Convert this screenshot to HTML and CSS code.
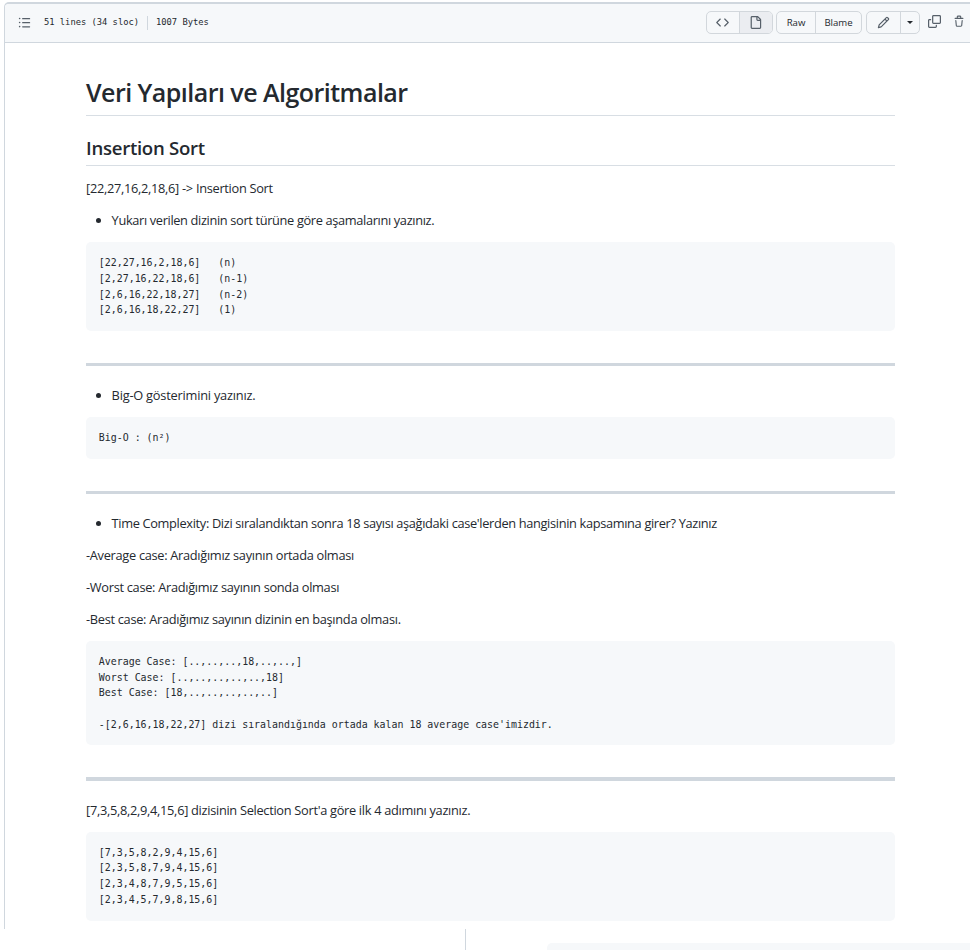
FILE: index.html
```
<!DOCTYPE html>
<html lang="tr">
<head>
<meta charset="utf-8">
<title>Veri Yapıları ve Algoritmalar</title>
<link rel="stylesheet" href="styles.css">
</head>
<body>
<main class="file">
  <header class="toolbar">
    <svg class="icon icon-list" viewBox="0 0 16 16"><path d="M2 4a1 1 0 1 0 0-2 1 1 0 0 0 0 2zm3.75-1.5a.75.75 0 0 0 0 1.5h8.5a.75.75 0 0 0 0-1.5h-8.5zm0 5a.75.75 0 0 0 0 1.5h8.5a.75.75 0 0 0 0-1.5h-8.5zm0 5a.75.75 0 0 0 0 1.5h8.5a.75.75 0 0 0 0-1.5h-8.5zM3 8a1 1 0 1 1-2 0 1 1 0 0 1 2 0zm-1 6a1 1 0 1 0 0-2 1 1 0 0 0 0 2z"/></svg>
    <span class="stat">51 lines (34 sloc)</span>
    <span class="stat-divider"></span>
    <span class="stat">1007 Bytes</span>
    <div class="actions">
      <div class="group group-view">
        <span class="btn"><svg class="icon" viewBox="0 0 16 16"><path d="M4.72 3.22a.75.75 0 0 1 1.06 1.06L2.06 8l3.72 3.72a.75.75 0 1 1-1.06 1.06L.47 8.53a.75.75 0 0 1 0-1.06l4.25-4.25zm6.56 0a.75.75 0 1 0-1.06 1.06L13.94 8l-3.72 3.72a.75.75 0 1 0 1.06 1.06l4.25-4.25a.75.75 0 0 0 0-1.06l-4.25-4.25z"/></svg></span>
        <span class="btn btn-selected"><svg class="icon" viewBox="0 0 16 16"><path fill-rule="evenodd" d="M3.75 1.5a.25.25 0 0 0-.25.25v12.5c0 .138.112.25.25.25h9.5a.25.25 0 0 0 .25-.25V6h-2.75A1.75 1.75 0 0 1 9 4.25V1.5H3.75zm6.75.062V4.25c0 .138.112.25.25.25h2.688a.252.252 0 0 0-.011-.013l-2.914-2.914a.272.272 0 0 0-.013-.011zM2 1.75C2 .784 2.784 0 3.75 0h6.586c.464 0 .909.184 1.237.513l2.914 2.914c.329.328.513.773.513 1.237v9.586A1.75 1.75 0 0 1 13.25 16h-9.5A1.75 1.75 0 0 1 2 14.25V1.75z"/></svg></span>
      </div>
      <div class="group group-text">
        <span class="btn">Raw</span>
        <span class="btn">Blame</span>
      </div>
      <div class="group group-edit">
        <span class="btn"><svg class="icon" viewBox="0 0 16 16"><path fill-rule="evenodd" d="M11.013 1.427a1.75 1.75 0 0 1 2.474 0l1.086 1.086a1.75 1.75 0 0 1 0 2.474l-8.61 8.61c-.21.21-.47.364-.756.445l-3.251.93a.75.75 0 0 1-.927-.928l.929-3.25a1.75 1.75 0 0 1 .445-.758l8.61-8.61zm1.414 1.06a.25.25 0 0 0-.354 0L10.811 3.75l1.439 1.44 1.263-1.263a.25.25 0 0 0 0-.354l-1.086-1.086zM11.189 6.25 9.75 4.81l-6.286 6.287a.25.25 0 0 0-.064.108l-.558 1.953 1.953-.558a.249.249 0 0 0 .108-.064l6.286-6.286z"/></svg></span>
        <span class="btn"><span class="caret"></span></span>
      </div>
      <svg class="icon icon-copy" viewBox="0 0 16 16"><path fill-rule="evenodd" d="M0 6.75C0 5.784.784 5 1.75 5h1.5a.75.75 0 0 1 0 1.5h-1.5a.25.25 0 0 0-.25.25v7.5c0 .138.112.25.25.25h7.5a.25.25 0 0 0 .25-.25v-1.5a.75.75 0 0 1 1.5 0v1.5A1.75 1.75 0 0 1 9.25 16h-7.5A1.75 1.75 0 0 1 0 14.25v-7.5zM5 1.75C5 .784 5.784 0 6.75 0h7.5C15.216 0 16 .784 16 1.75v7.5A1.75 1.75 0 0 1 14.25 11h-7.5A1.75 1.75 0 0 1 5 9.25v-7.5zm1.75-.25a.25.25 0 0 0-.25.25v7.5c0 .138.112.25.25.25h7.5a.25.25 0 0 0 .25-.25v-7.5a.25.25 0 0 0-.25-.25h-7.5z"/></svg>
      <svg class="icon icon-trash" viewBox="0 0 16 16"><path fill-rule="evenodd" d="M6.5 1.75a.25.25 0 0 1 .25-.25h2.5a.25.25 0 0 1 .25.25V3h-3V1.75zm4.5 0V3h2.25a.75.75 0 0 1 0 1.5H2.75a.75.75 0 0 1 0-1.5H5V1.75C5 .784 5.784 0 6.75 0h2.5C10.216 0 11 .784 11 1.75zM4.496 6.675a.75.75 0 1 0-1.492.15l.66 6.6A1.75 1.75 0 0 0 5.405 15h5.19c.9 0 1.652-.681 1.741-1.576l.66-6.6a.75.75 0 0 0-1.492-.149l-.66 6.6a.25.25 0 0 1-.249.225h-5.19a.25.25 0 0 1-.249-.225l-.66-6.6z"/></svg>
    </div>
  </header>
  <article class="doc">
    <h1>Veri Yapıları ve Algoritmalar</h1>
    <h2>Insertion Sort</h2>
    <p>[22,27,16,2,18,6] -&gt; Insertion Sort</p>
    <ul><li class="t-steps">Yukarı verilen dizinin sort türüne göre aşamalarını yazınız.</li></ul>
<pre>[22,27,16,2,18,6]   (n)
[2,27,16,22,18,6]   (n-1)
[2,6,16,22,18,27]   (n-2)
[2,6,16,18,22,27]   (1)</pre>
    <hr>
    <ul><li class="t-bigo">Big-O gösterimini yazınız.</li></ul>
<pre>Big-O : (n²)</pre>
    <hr>
    <ul><li class="t-time">Time Complexity: Dizi sıralandıktan sonra 18 sayısı aşağıdaki case'lerden hangisinin kapsamına girer? Yazınız</li></ul>
    <p>-Average case: Aradığımız sayının ortada olması</p>
    <p>-Worst case: Aradığımız sayının sonda olması</p>
    <p>-Best case: Aradığımız sayının dizinin en başında olması.</p>
<pre>Average Case: [..,..,..,18,..,..,]
Worst Case: [..,..,..,..,..,18]
Best Case: [18,..,..,..,..,..]

-[2,6,16,18,22,27] dizi sıralandığında ortada kalan 18 average case'imizdir.</pre>
    <hr>
    <p>[7,3,5,8,2,9,4,15,6] dizisinin Selection Sort'a göre ilk 4 adımını yazınız.</p>
<pre>[7,3,5,8,2,9,4,15,6]
[2,3,5,8,7,9,4,15,6]
[2,3,4,8,7,9,5,15,6]
[2,3,4,5,7,9,8,15,6]</pre>
  </article>
</main>
<footer class="next"><div class="next-box"></div></footer>
</body>
</html>
```
FILE: styles.css
```
* { box-sizing: border-box; }
body {
  margin: 0;
  height: 950px;
  overflow: hidden;
  background: #fff;
  color: #24292f;
  font: 12.8px/19.2px "Open Sans", "Noto Sans", sans-serif;
}
.file {
  height: 927px;
  margin: 2px 0 0 4px;
  border-top: 2px solid #d0d7de;
  border-left: 1px solid #d0d7de;
  border-top-left-radius: 5px;
}
.toolbar {
  display: flex;
  align-items: center;
  height: 39px;
  padding: 0 0 2px 13px;
  background: #f6f8fa;
  border-bottom: 1px solid #d0d7de;
  border-top-left-radius: 4px;
}
.icon { display: block; width: 13px; height: 13px; fill: #57606a; }
.icon-list { margin-right: 13px; }
.stat {
  font: 8.77px/16px "DejaVu Sans Mono", monospace;
  white-space: pre;
}
.stat-divider { width: 1px; height: 14px; margin: 1px 8px 0; background: #d0d7de; }
.actions { display: flex; align-items: center; margin-left: auto; padding-right: 5px; }
.group {
  display: flex;
  height: 23px;
  margin-right: 4px;
  border: 1px solid #d2d7dc;
  border-radius: 5px;
  overflow: hidden;
  font-size: 9.6px;
}
.btn { flex: 1 1 auto; display: flex; align-items: center; justify-content: center; }
.btn + .btn { border-left: 1px solid #d2d7dc; }
.btn-selected { background: #ebedf1; }
.group-view { width: 67px; margin-right: 3px; }
.group-view .btn { flex: 1 1 0; padding: 1px 1px 0 0; }
.group-text { width: 86px; }
.group-text .btn { padding-top: 1px; }
.group-text .btn:first-child { flex: 0 0 38px; }
.group-edit { width: 54px; margin-right: 8px; }
.group-edit .btn:first-child { flex: 0 0 33px; padding: 1px 1px 0 0; }
.group-edit .btn:last-child { padding: 1px 1px 0 0; }
.caret { border: 3px solid transparent; border-top-color: #24292f; border-bottom: 0; }
.icon-copy { margin: 0 12px 1px 0; }
.icon-trash { width: 12px; margin-bottom: 1px; }
.doc { width: 809px; margin: 31.8px 0 0 81px; }
h1, h2, p, ul, pre { margin: 0 0 12.8px; }
h1, h2 { font-weight: 600; border-bottom: 1px solid #d8dee4; white-space: nowrap; }
h1 {
  font-size: 25px;
  line-height: 32px;
  padding: 1.2px 0 6.9px;
  margin-bottom: 18.8px;
  letter-spacing: -0.53px;
}
h2 {
  font-size: 18.6px;
  line-height: 24px;
  padding: 1px 0 5.2px;
  margin-bottom: 12.4px;
  letter-spacing: -0.28px;
}
p, li {
  height: 19.2px;
  padding-top: 0.8px;
  white-space: nowrap;
  letter-spacing: -0.3px;
}
ul { padding-left: 25.6px; }
.t-steps { letter-spacing: -0.35px; }
.t-bigo { letter-spacing: -0.22px; }
.t-time { letter-spacing: -0.34px; }
pre {
  padding: 12.8px;
  background: #f6f8fa;
  border-radius: 5px;
  font: 9.93px/15.78px "DejaVu Sans Mono", monospace;
}
hr { height: 3.2px; margin: 32px 0 19.2px; border: 0; background: #d0d7de; }
.next {
  height: 21px;
  margin-left: 465px;
  padding: 14px 0 0 81px;
  border-left: 1px solid #d0d7de;
}
.next-box { height: 7px; background: #f6f8fa; border-top-left-radius: 5px; }
```
